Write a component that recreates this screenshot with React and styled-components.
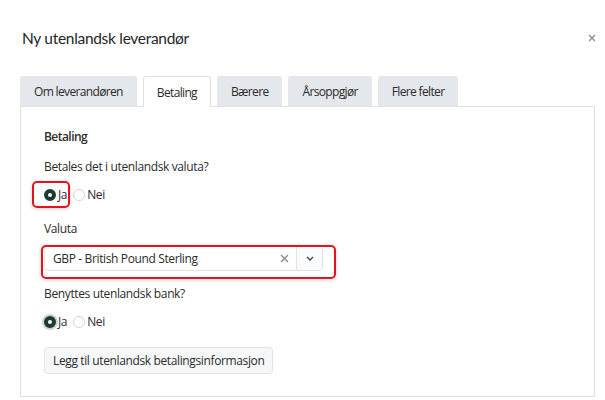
import { createGlobalStyle, styled } from "styled-components";

const GlobalStyle = createGlobalStyle`
    body {
        margin: 0;
        background: #fff;
        font-family: "Open Sans", "Noto Sans", sans-serif;
        color: #2b2b2b;
    }
`;

const Modal = styled.div`
    width: 605px;
    height: 400px;
    box-sizing: border-box;
    padding: 26px 9px 0 20px;
    overflow: hidden;
`;

const Header = styled.div`
    display: flex;
    justify-content: space-between;
    align-items: center;
    height: 24px;
    margin-left: 2px;
`;

const Title = styled.h2`
    margin: 0;
    font-family: Lato, "Open Sans", sans-serif;
    font-weight: normal;
    font-size: 15.5px;
    letter-spacing: -0.3px;
    line-height: 24px;
    color: #262626;
`;

const Close = styled.button`
    border: 0;
    background: none;
    padding: 0;
    width: 8px;
    height: 14px;
    display: flex;
    align-items: center;
    justify-content: center;
    color: #8a8a8a;
    cursor: pointer;
`;

const Tabs = styled.div`
    display: flex;
    gap: 6px;
    margin-top: 26px;
    position: relative;
    z-index: 1;
`;

const Tab = styled.button`
    box-sizing: border-box;
    padding: 0 13px;
    font-family: inherit;
    font-size: 12px;
    letter-spacing: -0.65px;
    color: #2b2b2b;
    border-radius: 3px 3px 0 0;
    border: 1px solid ${p => (p.$active ? "#dcdfe3" : "transparent")};
    border-bottom: 0;
    background: ${p => (p.$active ? "#fff" : "#e4e7eb")};
    height: ${p => (p.$active ? "31px" : "30px")};
    margin-bottom: ${p => (p.$active ? "-1px" : "0")};
`;

const Panel = styled.div`
    border: 1px solid #dcdfe3;
    width: 575px;
    height: 291px;
    box-sizing: border-box;
    padding: 21px 23px 0;
    font-size: 12px;
    letter-spacing: -0.37px;
`;

const Heading = styled.div`
    font-weight: 600;
    line-height: 18px;
    letter-spacing: -0.55px;
`;

const Label = styled.div`
    line-height: 18px;
    margin-top: ${p => p.$mt}px;
`;

const RadioRow = styled.div`
    display: flex;
    align-items: center;
    gap: 6px;
    height: 18px;
    margin-top: 10px;
`;

const Highlight = styled.span`
    position: relative;
    display: ${p => (p.$block ? "block" : "inline-flex")};
    width: ${p => (p.$width ? `${p.$width}px` : "auto")};
    &::after {
        content: "";
        position: absolute;
        inset: ${p => p.$inset};
        border: 2px solid #e5121c;
        border-radius: 5px;
        box-shadow: 0 1px 4px rgba(0, 0, 0, 0.18);
        pointer-events: none;
    }
`;

const Option = styled.label`
    display: inline-flex;
    align-items: center;
    gap: 2px;
    line-height: 18px;
`;

const Dot = styled.span`
    width: 12px;
    height: 12px;
    box-sizing: border-box;
    border-radius: 50%;
    border: ${p => (p.$checked ? "4px solid #1c3b30" : "1px solid #d3d5d8")};
    background: #fff;
    box-shadow: ${p => (p.$focus ? "0 0 0 2px rgba(28, 59, 48, 0.22)" : "none")};
`;

const Select = styled.div`
    display: flex;
    align-items: center;
    width: 279px;
    height: 26px;
    box-sizing: border-box;
    border: 1px solid #dfe2e6;
    border-radius: 4px;
    margin-top: 7px;
    background: #fff;
`;

const SelectValue = styled.div`
    flex: 1;
    padding-left: 8px;
`;

const Clear = styled.span`
    width: 24px;
    display: flex;
    justify-content: center;
    color: #8c8c8c;
`;

const Toggle = styled.span`
    width: 25px;
    height: 100%;
    border-left: 1px solid #e3e5e8;
    display: flex;
    align-items: center;
    justify-content: center;
    color: #444;
    background: #fafbfc;
    border-radius: 0 4px 4px 0;
`;

const Button = styled.button`
    margin-top: 16px;
    height: 27px;
    padding: 0 8px;
    font-family: inherit;
    font-size: 12px;
    letter-spacing: -0.37px;
    color: #2b2b2b;
    background: #f6f7f9;
    border: 1px solid #e1e3e7;
    border-radius: 4px;
`;

function Radio({ checked, focus, children }) {
    return (
        <Option>
            <Dot $checked={checked} $focus={focus} />
            {children}
        </Option>
    );
}

export default function App() {
    return (
        <Modal>
            <GlobalStyle />
            <Header>
                <Title>Ny utenlandsk leverandør</Title>
                <Close aria-label="Lukk">
                    <svg width="8" height="8" viewBox="0 0 8 8">
                        <path d="M1 1L7 7M7 1L1 7" stroke="currentColor" strokeWidth="1.3" />
                    </svg>
                </Close>
            </Header>
            <Tabs>
                <Tab>Om leverandøren</Tab>
                <Tab $active>Betaling</Tab>
                <Tab>Bærere</Tab>
                <Tab>Årsoppgjør</Tab>
                <Tab>Flere felter</Tab>
            </Tabs>
            <Panel>
                <Heading>Betaling</Heading>
                <Label $mt={12}>Betales det i utenlandsk valuta?</Label>
                <RadioRow>
                    <Highlight $inset="-5px -3px -4px -12px">
                        <Radio checked>Ja</Radio>
                    </Highlight>
                    <Radio>Nei</Radio>
                </RadioRow>
                <Label $mt={16}>Valuta</Label>
                <Highlight $block $width={279} $inset="0 -13px -8px -3px">
                    <Select>
                        <SelectValue>GBP - British Pound Sterling</SelectValue>
                        <Clear>
                            <svg width="9" height="9" viewBox="0 0 9 9">
                                <path d="M1 1L8 8M8 1L1 8" stroke="currentColor" strokeWidth="1.4" />
                            </svg>
                        </Clear>
                        <Toggle>
                            <svg width="8" height="5" viewBox="0 0 8 5">
                                <path d="M1 1L4 4L7 1" fill="none" stroke="currentColor" strokeWidth="1.3" />
                            </svg>
                        </Toggle>
                    </Select>
                </Highlight>
                <Label $mt={14}>Benyttes utenlandsk bank?</Label>
                <RadioRow>
                    <Radio checked focus>Ja</Radio>
                    <Radio>Nei</Radio>
                </RadioRow>
                <Button>Legg til utenlandsk betalingsinformasjon</Button>
            </Panel>
        </Modal>
    );
}
